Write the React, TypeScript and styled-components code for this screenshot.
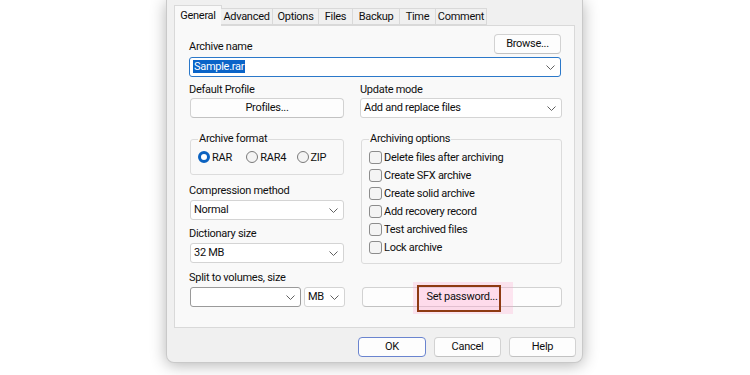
import React from 'react';
import styled, { createGlobalStyle } from 'styled-components';

const GlobalStyle = createGlobalStyle`
  html, body {
    margin: 0;
    padding: 0;
    background: #ffffff;
  }
  body {
    width: 750px;
    height: 375px;
    overflow: hidden;
    font-family: Roboto, 'Noto Sans', sans-serif;
    font-size: 11px;
    letter-spacing: -0.28px;
    color: #0f0f0f;
  }
`;

const Stage = styled.div`
  width: 750px;
  height: 375px;
  display: flex;
  align-items: flex-start;
`;

const Dialog = styled.div`
  margin-left: 166px;
  width: 417px;
  height: 363px;
  box-sizing: border-box;
  background: #f0f0f0;
  border: 1px solid #c9c9c9;
  border-top: none;
  border-radius: 0 0 8px 8px;
  box-shadow: 0 2px 16px rgba(0, 0, 0, 0.3);
  padding: 5px 7px 0 7px;
  display: flex;
  flex-direction: column;
`;

const TabRow = styled.div`
  display: flex;
  align-items: flex-end;
  height: 20px;
  position: relative;
  z-index: 1;
`;

const Tab = styled.div<{ $active?: boolean; $w: number }>`
  width: ${p => p.$w}px;
  box-sizing: border-box;
  height: ${p => (p.$active ? 21 : 17)}px;
  margin-bottom: ${p => (p.$active ? -1 : 0)}px;
  margin-right: ${p => (p.$active ? -1 : 0)}px;
  display: flex;
  align-items: ${p => (p.$active ? 'flex-start' : 'center')};
  padding-top: ${p => (p.$active ? 3 : 0)}px;
  justify-content: center;
  background: ${p => (p.$active ? '#f9f9f9' : '#f0f0f0')};
  border: 1px solid #d9d9d9;
  border-bottom: ${p => (p.$active ? 'none' : '1px solid #d9d9d9')};
  border-left: ${p => (p.$active ? '1px solid #d9d9d9' : 'none')};
  line-height: 14px;
  white-space: nowrap;
`;

const Panel = styled.div`
  height: 303px;
  box-sizing: border-box;
  background: #f9f9f9;
  border: 1px solid #d9d9d9;
  padding: 7px 13px 0 14px;
  display: flex;
  flex-direction: column;
`;

const NameRow = styled.div`
  display: flex;
  justify-content: space-between;
  align-items: flex-end;
  height: 21px;
`;

const Label = styled.div<{ $mt?: number }>`
  line-height: 14px;
  height: 14px;
  margin-top: ${p => p.$mt ?? 0}px;
  white-space: nowrap;
`;

const Button = styled.div<{ $w?: number; $primary?: boolean; $mt?: number; $ml?: number }>`
  box-sizing: border-box;
  width: ${p => (p.$w ? `${p.$w}px` : 'auto')};
  height: 20px;
  margin-top: ${p => p.$mt ?? 0}px;
  margin-left: ${p => p.$ml ?? 0}px;
  background: #fdfdfd;
  border: 1px solid ${p => (p.$primary ? '#6a84cf' : '#d2d2d2')};
  border-bottom-color: ${p => (p.$primary ? '#6a84cf' : '#c2c2c2')};
  border-radius: 4px;
  display: flex;
  align-items: center;
  justify-content: center;
  line-height: 14px;
  white-space: nowrap;
  position: relative;
`;

const Select = styled.div<{ $w?: number; $focus?: boolean; $dark?: boolean; $mt?: number; $ml?: number }>`
  box-sizing: border-box;
  width: ${p => (p.$w ? `${p.$w}px` : '100%')};
  height: 20px;
  margin-top: ${p => p.$mt ?? 0}px;
  margin-left: ${p => p.$ml ?? 0}px;
  background: #ffffff;
  border: 1px solid ${p => (p.$focus ? '#2b78c9' : p.$dark ? '#9a9a9a' : '#d4d4d4')};
  border-radius: 3px;
  display: flex;
  align-items: center;
  justify-content: space-between;
  padding: 0 5px 0 3px;
  line-height: 14px;
  white-space: nowrap;
  flex-shrink: 0;
`;

const Selected = styled.span`
  background: #0a64c8;
  color: #ffffff;
  padding: 0 1px;
`;

const Chevron = () => (
  <svg width="9" height="5" viewBox="0 0 9 5">
    <path d="M0.5 0.5 L4.5 4.5 L8.5 0.5" fill="none" stroke="#606060" strokeWidth="1" />
  </svg>
);

const Columns = styled.div`
  display: grid;
  grid-template-columns: 155px 202px;
  column-gap: 16px;
  margin-top: 6px;
`;

const Column = styled.div`
  display: flex;
  flex-direction: column;
  align-items: stretch;
`;

const Group = styled.fieldset<{ $h: number; $mt: number }>`
  margin: ${p => p.$mt}px 0 0 1px;
  height: ${p => p.$h}px;
  box-sizing: border-box;
  padding: 0 7px;
  border: 1px solid #dcdcdc;
  border-radius: 3px;
  min-width: 0;
`;

const Legend = styled.legend`
  padding: 0 1px;
  margin-left: 0;
  line-height: 14px;
  font-size: 11px;
`;

const RadioRow = styled.div`
  display: flex;
  align-items: center;
  margin-top: 4px;
  height: 14px;
`;

const RadioItem = styled.div<{ $w: number }>`
  display: flex;
  align-items: center;
  width: ${p => p.$w}px;
  gap: 2px;
`;

const RadioDot = styled.div<{ $on?: boolean }>`
  width: 12px;
  height: 12px;
  box-sizing: border-box;
  border-radius: 50%;
  border: ${p => (p.$on ? '3.5px solid #0b62c0' : '1px solid #7a7a7a')};
  background: ${p => (p.$on ? '#ffffff' : '#f4f4f4')};
  flex-shrink: 0;
`;

const CheckList = styled.div`
  display: flex;
  flex-direction: column;
  margin-top: 2px;
`;

const CheckRow = styled.div`
  display: flex;
  align-items: center;
  height: 18px;
  gap: 2px;
`;

const CheckBox = styled.div`
  width: 13px;
  height: 13px;
  box-sizing: border-box;
  border: 1px solid #8c8c8c;
  border-radius: 3px;
  background: #f4f4f4;
  flex-shrink: 0;
`;

const SplitRow = styled.div`
  display: flex;
  gap: 3px;
  margin-top: 2px;
  margin-left: 1px;
`;

const Highlight = styled.div`
  position: absolute;
  left: 50px;
  top: -6px;
  width: 100px;
  height: 32px;
  background: rgba(255, 170, 210, 0.28);
  pointer-events: none;
`;

const Callout = styled.div`
  position: absolute;
  left: 54px;
  top: -3px;
  width: 84px;
  height: 27px;
  box-sizing: border-box;
  border: 2px solid #8e3a12;
  background: rgba(255, 200, 225, 0.35);
  pointer-events: none;
`;

const ButtonLabel = styled.span`
  position: relative;
  z-index: 1;
`;

const Footer = styled.div`
  display: flex;
  justify-content: flex-end;
  gap: 8px;
  margin-top: 9px;
  margin-right: -1px;
`;

const tabs: [string, number][] = [
  ['General', 48],
  ['Advanced', 52],
  ['Options', 46],
  ['Files', 34],
  ['Backup', 47],
  ['Time', 36],
  ['Comment', 51],
];

const options = [
  'Delete files after archiving',
  'Create SFX archive',
  'Create solid archive',
  'Add recovery record',
  'Test archived files',
  'Lock archive',
];

export default function App() {
  return (
    <>
      <GlobalStyle />
      <Stage>
        <Dialog>
          <TabRow>
            {tabs.map(([t, w], i) => (
              <Tab key={t} $w={w} $active={i === 0}>
                {t}
              </Tab>
            ))}
          </TabRow>
          <Panel>
            <NameRow>
              <Label>Archive name</Label>
              <Button $w={67}>Browse...</Button>
            </NameRow>
            <Select $focus $mt={3}>
              <span>
                <Selected>Sample.rar</Selected>
              </span>
              <Chevron />
            </Select>
            <Columns>
              <Column>
                <Label>Default Profile</Label>
                <Button $mt={1} $ml={1}>Profiles...</Button>
                <Group $h={43} $mt={14}>
                  <Legend>Archive format</Legend>
                  <RadioRow>
                    <RadioItem $w={49}>
                      <RadioDot $on />
                      RAR
                    </RadioItem>
                    <RadioItem $w={51}>
                      <RadioDot />
                      RAR4
                    </RadioItem>
                    <RadioItem $w={40}>
                      <RadioDot />
                      ZIP
                    </RadioItem>
                  </RadioRow>
                </Group>
                <Label $mt={9}>Compression method</Label>
                <Select $mt={2} $w={154} $ml={1}>
                  <span>Normal</span>
                  <Chevron />
                </Select>
                <Label $mt={7}>Dictionary size</Label>
                <Select $mt={2} $w={154} $ml={1}>
                  <span>32 MB</span>
                  <Chevron />
                </Select>
                <Label $mt={8}>Split to volumes, size</Label>
                <SplitRow>
                  <Select $w={111} $dark>
                    <span />
                    <Chevron />
                  </Select>
                  <Select $w={41}>
                    <span>MB</span>
                    <Chevron />
                  </Select>
                </SplitRow>
              </Column>
              <Column>
                <Label>Update mode</Label>
                <Select $mt={1}>
                  <span>Add and replace files</span>
                  <Chevron />
                </Select>
                <Group $h={132} $mt={14}>
                  <Legend>Archiving options</Legend>
                  <CheckList>
                    {options.map(o => (
                      <CheckRow key={o}>
                        <CheckBox />
                        {o}
                      </CheckRow>
                    ))}
                  </CheckList>
                </Group>
                <Button $mt={23} $ml={2}>
                  <Highlight />
                  <Callout />
                  <ButtonLabel>Set password...</ButtonLabel>
                </Button>
              </Column>
            </Columns>
          </Panel>
          <Footer>
            <Button $w={68} $primary>OK</Button>
            <Button $w={67}>Cancel</Button>
            <Button $w={67}>Help</Button>
          </Footer>
        </Dialog>
      </Stage>
    </>
  );
}
